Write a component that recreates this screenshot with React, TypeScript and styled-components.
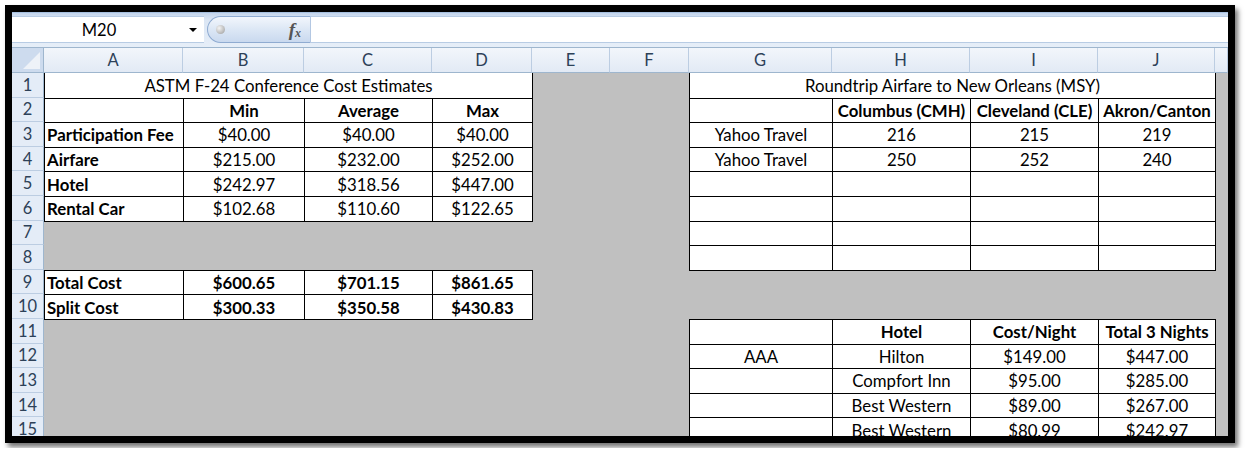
import styled, { createGlobalStyle } from 'styled-components'

const GlobalStyle = createGlobalStyle`
    html, body {
        margin: 0;
        padding: 0;
        background: #ffffff;
    }
    body {
        font-family: Lato, "Open Sans", sans-serif;
    }
`

const COLS = '32px 139px 121px 128px 100px 78px 79px 143px 138px 128px 117px 1fr'
const LETTERS = ['A', 'B', 'C', 'D', 'E', 'F', 'G', 'H', 'I', 'J', '']

type Kind = 'gray' | 'box' | 'title'
type CellDef = { text?: string; kind?: Kind; span?: number; bold?: boolean; left?: boolean }

const g = (span = 1): CellDef => ({ kind: 'gray', span })
const b = (text = '', bold = false, left = false): CellDef => ({ kind: 'box', text, bold, left })

// one entry per sheet row (1..15), columns A..K
const rows: CellDef[][] = [
    [
        { kind: 'title', span: 4, text: 'ASTM F-24 Conference Cost Estimates' },
        g(2),
        { kind: 'title', span: 4, text: 'Roundtrip Airfare to New Orleans (MSY)' },
        g(),
    ],
    [b(), b('Min', true), b('Average', true), b('Max', true), g(2), b(), b('Columbus (CMH)', true), b('Cleveland (CLE)', true), b('Akron/Canton', true), g()],
    [b('Participation Fee', true, true), b('$40.00'), b('$40.00'), b('$40.00'), g(2), b('Yahoo Travel'), b('216'), b('215'), b('219'), g()],
    [b('Airfare', true, true), b('$215.00'), b('$232.00'), b('$252.00'), g(2), b('Yahoo Travel'), b('250'), b('252'), b('240'), g()],
    [b('Hotel', true, true), b('$242.97'), b('$318.56'), b('$447.00'), g(2), b(), b(), b(), b(), g()],
    [b('Rental Car', true, true), b('$102.68'), b('$110.60'), b('$122.65'), g(2), b(), b(), b(), b(), g()],
    [g(6), b(), b(), b(), b(), g()],
    [g(6), b(), b(), b(), b(), g()],
    [b('Total Cost', true, true), b('$600.65', true), b('$701.15', true), b('$861.65', true), g(7)],
    [b('Split Cost', true, true), b('$300.33', true), b('$350.58', true), b('$430.83', true), g(7)],
    [g(6), b(), b('Hotel', true), b('Cost/Night', true), b('Total 3 Nights', true), g()],
    [g(6), b('AAA'), b('Hilton'), b('$149.00'), b('$447.00'), g()],
    [g(6), b(), b('Compfort Inn'), b('$95.00'), b('$285.00'), g()],
    [g(6), b(), b('Best Western'), b('$89.00'), b('$267.00'), g()],
    [g(6), b(), b('Best Western'), b('$80.99'), b('$242.97'), g()],
]

export default function App() {
    return (
        <>
            <GlobalStyle />
            <Frame>
                <FormulaBar>
                    <NameBox>
                        <span>M20</span>
                        <DropArrow />
                    </NameBox>
                    <FxPill>
                        <Knob />
                        <Fx>
                            f<sub>x</sub>
                        </Fx>
                    </FxPill>
                    <FormulaInput />
                </FormulaBar>
                <Sheet>
                    <Corner />
                    {LETTERS.map((l, i) => (
                        <ColHead key={i}>{l}</ColHead>
                    ))}
                    {rows.map((cells, r) => [
                        <RowHead key={`h${r}`}>{r + 1}</RowHead>,
                        ...cells.map((c, i) => (
                            <Cell
                                key={`${r}-${i}`}
                                $kind={c.kind ?? 'gray'}
                                $span={c.span ?? 1}
                                $bold={c.bold}
                                $left={c.left}
                            >
                                {c.text}
                            </Cell>
                        )),
                    ])}
                </Sheet>
            </Frame>
        </>
    )
}

const Frame = styled.div`
    box-sizing: border-box;
    margin: 5px;
    width: 1230px;
    height: 438px;
    border: 7px solid #000;
    box-shadow: 3px 4px 5px rgba(0, 0, 0, 0.55);
    display: flex;
    flex-direction: column;
    overflow: hidden;
    background: #c0c0c0;
`

const FormulaBar = styled.div`
    flex: none;
    height: 36px;
    box-sizing: border-box;
    display: flex;
    align-items: stretch;
    padding: 3px 0 4px;
    background: linear-gradient(#c3d5ec, #dbe6f4 20%, #e6eef8);
    border-top: 1px solid #a7c0df;
    border-bottom: 1px solid #9eb6ce;
`

const NameBox = styled.div`
    box-sizing: border-box;
    width: 192px;
    flex: none;
    position: relative;
    display: flex;
    align-items: center;
    justify-content: center;
    background: #fff;
    border-top: 1px solid #b8cce4;
    border-bottom: 1px solid #b8cce4;
    font-family: Lato, sans-serif;
    font-size: 16.5px;
    color: #000;
    padding-right: 18px;
`

const DropArrow = styled.span`
    position: absolute;
    right: 7px;
    top: 50%;
    margin-top: -2px;
    border-left: 4px solid transparent;
    border-right: 4px solid transparent;
    border-top: 4px solid #000;
`

const FxPill = styled.div`
    width: 104px;
    flex: none;
    margin-left: 3px;
    box-sizing: border-box;
    display: flex;
    align-items: center;
    justify-content: space-between;
    padding: 0 9px 0 8px;
    border: 1px solid #8fabd1;
    border-right-color: #b3c7e2;
    border-radius: 14px 0 0 14px;
    background: linear-gradient(#f2f6fc, #dce7f5 50%, #c9d9ef);
`

const Knob = styled.span`
    width: 9px;
    height: 9px;
    border-radius: 50%;
    background: radial-gradient(circle at 35% 35%, #f4f4f4, #b4b4b4 70%, #9a9a9a);
`

const Fx = styled.span`
    font-family: 'Liberation Serif', serif;
    font-style: italic;
    font-weight: bold;
    font-size: 19px;
    color: #555;
    line-height: 1;

    sub {
        font-size: 12px;
        vertical-align: -1px;
    }
`

const FormulaInput = styled.div`
    flex: 1;
    background: #fff;
    border-top: 1px solid #b8cce4;
    border-bottom: 1px solid #b8cce4;
`

const Sheet = styled.div`
    flex: 1;
    overflow: hidden;
    display: grid;
    grid-template-columns: ${COLS};
    grid-template-rows: 25px repeat(15, 24.6px);
    background: #c0c0c0;
    font-family: Lato, sans-serif;
    font-size: 16.8px;
    color: #000;
`

const Corner = styled.div`
    position: relative;
    background: #cddbee;
    border-right: 1px solid #9eb6ce;
    border-bottom: 1px solid #9eb6ce;

    &::after {
        content: '';
        position: absolute;
        right: 3px;
        bottom: 3px;
        border-left: 17px solid transparent;
        border-bottom: 17px solid #eef2f8;
    }
`

const ColHead = styled.div`
    display: flex;
    align-items: center;
    justify-content: center;
    background: linear-gradient(#f2f6fb, #e2eaf5);
    border-right: 1px solid #bccde2;
    border-bottom: 1px solid #9eb6ce;
    color: #2d4158;
    font-size: 16.5px;
`

const RowHead = styled.div`
    display: flex;
    align-items: center;
    justify-content: center;
    background: #e4ecf7;
    border-right: 1px solid #9eb6ce;
    border-bottom: 1px solid #bccde2;
    color: #2d4158;
    font-size: 16.5px;
`

const Cell = styled.div<{ $kind: Kind; $span: number; $bold?: boolean; $left?: boolean }>`
    grid-column: span ${({ $span }) => $span};
    display: flex;
    align-items: center;
    justify-content: ${({ $left }) => ($left ? 'flex-start' : 'center')};
    padding: 0 2px;
    white-space: nowrap;
    overflow: hidden;
    font-weight: ${({ $bold }) => ($bold ? 700 : 400)};
    min-width: 0;

    ${({ $kind }) =>
        $kind === 'box' &&
        `
        background: #fff;
        border: 1px solid #000;
        margin: 0 -1px -1px 0;
    `}

    ${({ $kind }) =>
        $kind === 'title' &&
        `
        background: #fff;
        border-left: 1px solid #000;
        border-right: 1px solid #000;
        margin-right: -1px;
    `}
`
